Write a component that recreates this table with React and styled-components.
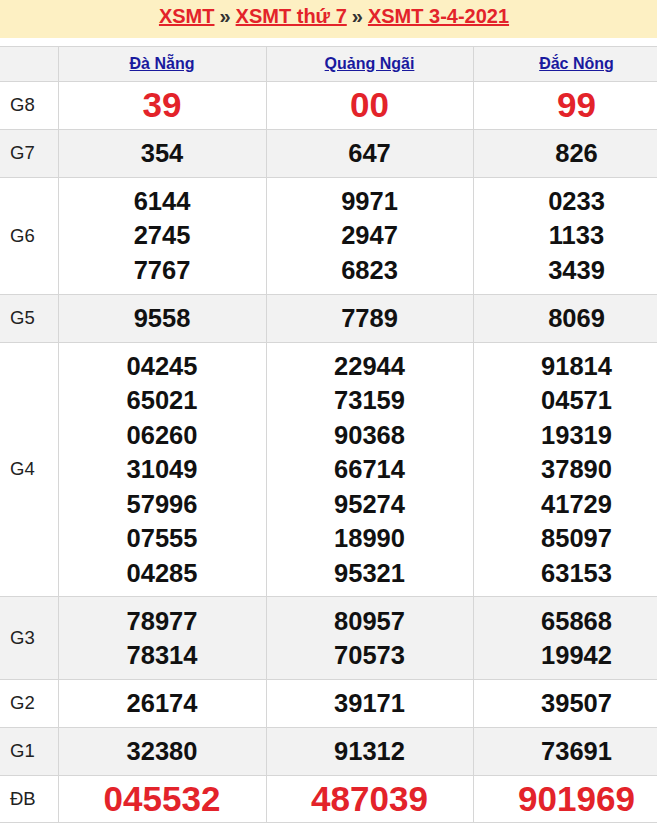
import React from "react";
import styled, { createGlobalStyle } from "styled-components";

const Global = createGlobalStyle`
  html, body { margin: 0; padding: 0; background: #fff; overflow: hidden; }
  body { font-family: "Liberation Sans", Arial, sans-serif; }
`;

const Page = styled.div`
  width: 680px;
`;

const TitleBar = styled.div`
  background: #fdf0c3;
  height: 38px;
  display: flex;
  align-items: center;
  justify-content: center;
  font-size: 20px;
  font-weight: bold;
  color: #333;
  margin-bottom: 8px;
  padding: 0 12px 6px 0;
  box-sizing: border-box;
  gap: 5px;
`;

const TitleLink = styled.a`
  color: #e3232a;
  text-decoration: underline;
`;

const Sep = styled.span`
  color: #333;
`;

const Table = styled.table`
  width: 680px;
  table-layout: fixed;
  border-collapse: collapse;
  border-top: 1px solid #d6d6d6;
`;

const Col = styled.col`
  width: ${(p) => p.$w}px;
`;

const Row = styled.tr`
  background: ${(p) => (p.$alt ? "#f2f2f2" : "#fff")};
`;

const HeadCell = styled.th`
  height: 34px;
  padding: 0;
  border: 1px solid #d6d6d6;
  border-top: none;
  text-align: center;
  vertical-align: middle;
  font-size: 16px;
  font-weight: bold;
  &:first-child { border-left: none; }
`;

const HeadLink = styled.a`
  color: #1a1a9e;
  text-decoration: underline;
`;

const Label = styled.td`
  border: 1px solid #d6d6d6;
  border-left: none;
  padding: 0 0 0 10px;
  font-size: 18.5px;
  color: #222;
  vertical-align: middle;
`;

const Cell = styled.td`
  border: 1px solid #d6d6d6;
  padding: 6.2px 0;
  text-align: center;
  vertical-align: middle;
`;

const Num = styled.div`
  font-weight: bold;
  font-size: ${(p) => (p.$big ? "35px" : "25.5px")};
  line-height: 34.5px;
  color: ${(p) => (p.$big ? "#e3232a" : "#111")};
`;

const provinces = ["Đà Nẵng", "Quảng Ngãi", "Đắc Nông"];

const rows = [
  { label: "G8", big: true, data: [["39"], ["00"], ["99"]] },
  { label: "G7", data: [["354"], ["647"], ["826"]] },
  {
    label: "G6",
    data: [
      ["6144", "2745", "7767"],
      ["9971", "2947", "6823"],
      ["0233", "1133", "3439"],
    ],
  },
  { label: "G5", data: [["9558"], ["7789"], ["8069"]] },
  {
    label: "G4",
    data: [
      ["04245", "65021", "06260", "31049", "57996", "07555", "04285"],
      ["22944", "73159", "90368", "66714", "95274", "18990", "95321"],
      ["91814", "04571", "19319", "37890", "41729", "85097", "63153"],
    ],
  },
  {
    label: "G3",
    data: [
      ["78977", "78314"],
      ["80957", "70573"],
      ["65868", "19942"],
    ],
  },
  { label: "G2", data: [["26174"], ["39171"], ["39507"]] },
  { label: "G1", data: [["32380"], ["91312"], ["73691"]] },
  { label: "ĐB", big: true, data: [["045532"], ["487039"], ["901969"]] },
];

export default function App() {
  return (
    <Page>
      <Global />
      <TitleBar>
        <TitleLink>XSMT</TitleLink>
        <Sep>»</Sep>
        <TitleLink>XSMT thứ 7</TitleLink>
        <Sep>»</Sep>
        <TitleLink>XSMT 3-4-2021</TitleLink>
      </TitleBar>
      <Table>
        <colgroup>
          <Col $w={58} />
          <Col $w={208} />
          <Col $w={207} />
          <Col $w={207} />
        </colgroup>
        <thead>
          <Row $alt>
            <HeadCell />
            {provinces.map((p) => (
              <HeadCell key={p}>
                <HeadLink>{p}</HeadLink>
              </HeadCell>
            ))}
          </Row>
        </thead>
        <tbody>
          {rows.map((r, i) => (
            <Row key={r.label} $alt={i % 2 === 1}>
              <Label>{r.label}</Label>
              {r.data.map((nums, j) => (
                <Cell key={j}>
                  {nums.map((n, k) => (
                    <Num key={k} $big={r.big}>
                      {n}
                    </Num>
                  ))}
                </Cell>
              ))}
            </Row>
          ))}
        </tbody>
      </Table>
    </Page>
  );
}
